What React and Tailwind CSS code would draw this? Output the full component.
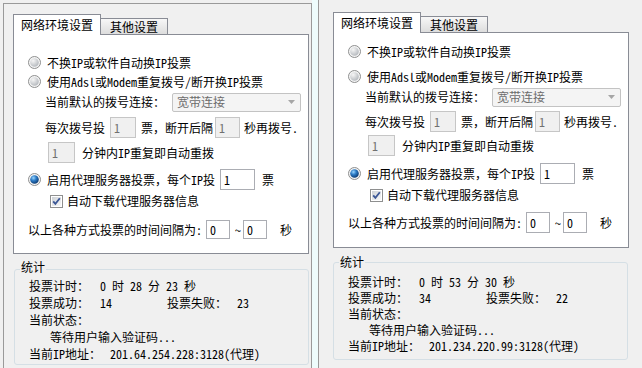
import React from "react";

const font = "font-['Noto_Sans_Mono_CJK_SC','Noto_Sans_CJK_SC',sans-serif]";

function Radio({ checked }) {
  return (
    <svg width="13" height="13" viewBox="0 0 13 13" className="shrink-0">
      <defs>
        <radialGradient id="radio-off" cx="35%" cy="30%" r="75%">
          <stop offset="0" stopColor="#f6f6f6" />
          <stop offset="1" stopColor="#b4b8bd" />
        </radialGradient>
        <radialGradient id="radio-on" cx="38%" cy="32%" r="70%">
          <stop offset="0" stopColor="#9bd6ff" />
          <stop offset="0.45" stopColor="#2d7cc6" />
          <stop offset="1" stopColor="#0c3a72" />
        </radialGradient>
      </defs>
      <circle cx="6.5" cy="6.5" r="6" fill="#f4f4f4" stroke="#8e8f8f" />
      <circle cx="6.5" cy="6.5" r="4.3" fill={checked ? "url(#radio-on)" : "url(#radio-off)"} />
    </svg>
  );
}

function Check() {
  return (
    <svg width="13" height="13" viewBox="0 0 13 13" className="shrink-0">
      <defs>
        <linearGradient id="check-fill" x1="0" y1="0" x2="1" y2="1">
          <stop offset="0" stopColor="#cdd1d6" />
          <stop offset="1" stopColor="#f8f8f8" />
        </linearGradient>
      </defs>
      <rect x="0.5" y="0.5" width="12" height="12" fill="#fff" stroke="#8e8f8f" />
      <rect x="2" y="2" width="9" height="9" fill="url(#check-fill)" />
      <path d="M3.2 6.3 L5.4 8.9 L9.8 3.2" fill="none" stroke="#3b5796" strokeWidth="1.8" />
    </svg>
  );
}

function Field({ value, off, className }) {
  return (
    <div
      className={`flex shrink-0 items-center border pl-[3px] ${
        off ? "border-[#c6c6c6] bg-[#f0f0f0] text-[#707070]" : "border-[#abadb3] bg-white text-black"
      } ${className}`}
    >
      {value}
    </div>
  );
}

function Panel({ right, time, ok, fail, ip }) {
  return (
    <div className={right ? "ml-[14px] mt-[12px]" : "ml-[9px] mt-[10px]"}>
      {/* tabs */}
      <div className="flex h-[20px] items-end">
        <div className="relative z-10 flex h-[21px] w-[88px] items-center justify-center self-start border border-b-0 border-[#898c95] bg-white">
          网络环境设置
        </div>
        <div className="flex h-[16px] w-[67px] items-center justify-center border-t border-r border-[#898c95] bg-gradient-to-b from-[#f7f7f7] to-[#dddddd]">
          其他设置
        </div>
      </div>

      {/* tab page */}
      <div className={`w-[296px] border border-[#898c95] bg-white ${right ? "h-[216px]" : "h-[220px]"}`}>
        <div className={`flex items-center pl-[14px] h-[19px] ${right ? "mt-[9px]" : "mt-[18px]"}`}>
          <Radio />
          <span className="ml-[6px]">不换IP或软件自动换IP投票</span>
        </div>
        <div className={`flex items-center pl-[14px] h-[19px] ${right ? "mt-[6px]" : "mt-0"}`}>
          <Radio />
          <span className="ml-[6px]">使用Adsl或Modem重复拨号/断开换IP投票</span>
        </div>
        <div className="mt-px flex h-[20px] items-center pl-[31px]">
          <span>当前默认的拨号连接：</span>
          <div className="ml-[7px] flex h-[19px] w-[129px] items-center justify-between rounded-[2px] border border-[#c3c3c3] bg-[#f4f4f4] pl-[4px] pr-[5px] text-[#6d6d6d]">
            <span>宽带连接</span>
            <svg width="7" height="4" viewBox="0 0 7 4">
              <path d="M0 0H7L3.5 4Z" fill="#a6a6a6" />
            </svg>
          </div>
        </div>
        <div className={`flex h-[21px] items-center pl-[31px] ${right ? "mt-[4px]" : "mt-[5px]"}`}>
          <span>每次拨号投</span>
          <Field off value="1" className="ml-[5px] h-full w-[26px]" />
          <span className="ml-[5px]">票，断开后隔</span>
          <Field off value="1" className="ml-[2px] h-full w-[25px]" />
          <span className="ml-[4px]">秒再拨号.</span>
        </div>
        <div className={`flex h-[21px] items-center pl-[34px] ${right ? "mt-[3px]" : "mt-[4px]"}`}>
          <Field off value="1" className="h-full w-[27px]" />
          <span className="ml-[7px]">分钟内IP重复即自动重拨</span>
        </div>
        <div className={`flex h-[21px] items-center pl-[14px] ${right ? "mt-[7px]" : "mt-[6px]"}`}>
          <Radio checked />
          <span className="ml-[6px]">启用代理服务器投票，每个IP投</span>
          <Field value="1" className="ml-[5px] h-full w-[35px]" />
          <span className="ml-[7px]">票</span>
        </div>
        <div className="mt-[2px] flex h-[18px] items-center pl-[36px]">
          <Check />
          <span className="ml-[4px]">自动下载代理服务器信息</span>
        </div>
        <div className={`flex items-center pl-[14px] ${right ? "mt-[8px] h-[21px]" : "mt-[10px] h-[19px]"}`}>
          <span>以上各种方式投票的时间间隔为:</span>
          <Field value="0" className="ml-[4px] h-full w-[24px]" />
          <span className="ml-[5px]">~</span>
          <Field value="0" className="ml-[2px] h-full w-[24px]" />
          <span className="ml-[13px]">秒</span>
        </div>
      </div>

      {/* stats group */}
      <div
        className={`relative w-[295px] rounded-[3px] border border-[#d5dfe5] pl-[14px] ${
          right ? "mt-[14px] h-[98px] pt-[11px]" : "ml-px mt-[15px] h-[96px] pt-[7px]"
        }`}
      >
        <span className={`absolute left-[5px] bg-[#f0f0f0] px-px ${right ? "top-[-7px]" : "top-[-9px]"}`}>统计</span>
        <div className={`flex items-center ${right ? "h-[16px]" : "h-[17px]"}`}>
          <span className="w-[71px]">投票计时：</span>
          <span>{time}</span>
        </div>
        <div className={`flex items-center ${right ? "h-[16px]" : "h-[17px]"}`}>
          <span className="w-[71px]">投票成功：</span>
          <span className="w-[67px]">{ok}</span>
          <span className="w-[70px]">投票失败：</span>
          <span>{fail}</span>
        </div>
        <div className={`flex items-center ${right ? "h-[16px]" : "h-[17px]"}`}>当前状态：</div>
        <div className={`flex items-center pl-[21px] ${right ? "h-[16px]" : "h-[17px]"}`}>等待用户输入验证码...</div>
        <div className={`flex items-center ${right ? "h-[16px]" : "h-[17px]"}`}>
          <span className="w-[81px]">当前IP地址：</span>
          <span>{ip}</span>
        </div>
      </div>
    </div>
  );
}

export default function App() {
  return (
    <div className={`flex h-[368px] w-[642px] overflow-hidden bg-[#f0f0f0] text-[12px] leading-[12px] text-black ${font}`}>
      <div className="h-full w-[312px] shrink-0 pl-[3px] pt-[3px]">
        <div className="h-full border-l border-t border-r border-[#9a9a9a]">
          <Panel time="0 时 28 分 23 秒" ok="14" fail="23" ip="201.64.254.228:3128(代理)" />
        </div>
      </div>
      <div className="h-full w-[6px] shrink-0 bg-[#eefcfc]" />
      <div className="h-full flex-1 border-l border-[#9a9a9a]">
        <Panel right time="0 时 53 分 30 秒" ok="34" fail="22" ip="201.234.220.99:3128(代理)" />
      </div>
    </div>
  );
}
